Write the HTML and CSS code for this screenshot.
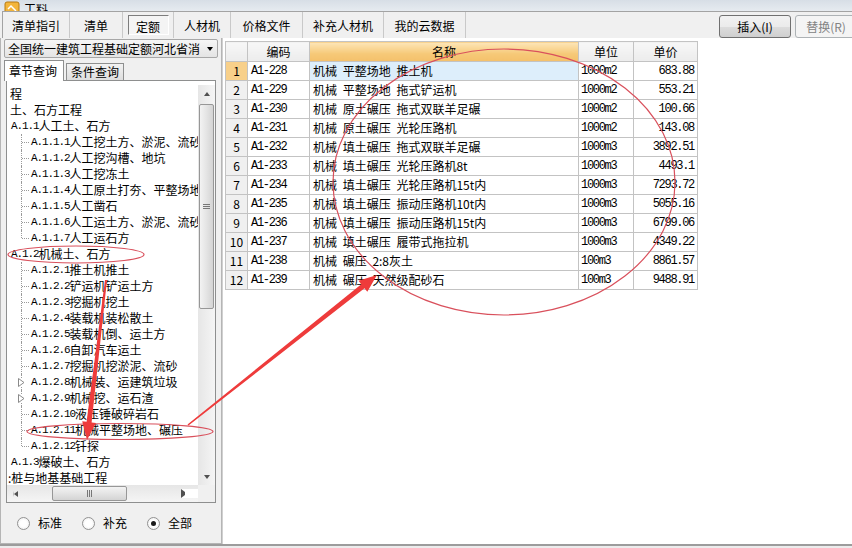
FILE: index.html
```html
<!DOCTYPE html>
<html lang="zh-CN">
<head>
<meta charset="utf-8">
<title>工料</title>
<link rel="stylesheet" href="styles.css">
</head>
<body>
<div class="app">
  <div class="titlebar">
    <svg class="ticon" width="16" height="16" viewBox="0 0 16 16"><rect x="1" y="2" width="14" height="13" rx="2" fill="#f3b53b" stroke="#b77a12"/><path d="M4 9 L7 6 L12 11" stroke="#fff" stroke-width="1.5" fill="none"/></svg>
    <span class="ttitle">工料</span>
  </div>
  <div class="toolbar">
    <div class="tabs">
      <div class="tab t1">清单指引</div>
      <div class="tab t2">清单</div>
      <div class="tab t3"><span class="pressed">定额</span></div>
      <div class="tab t4">人材机</div>
      <div class="tab t5">价格文件</div>
      <div class="tab t6">补充人材机</div>
      <div class="tab t7">我的云数据</div>
    </div>
    <div class="tbright">
      <button class="btn">插入(I)</button>
      <button class="btn off" disabled>替换(R)</button>
    </div>
  </div>
  <div class="main">
    <div class="left">
      <div class="combo"><span class="combo-text">全国统一建筑工程基础定额河北省消</span><span class="combo-arrow"></span></div>
      <div class="qtabs">
        <div class="qtab on">章节查询</div>
        <div class="qtab">条件查询</div>
      </div>
      <div class="treebox">
        <div class="treeview">
          <div class="tree">
            <div class="node l0">程</div>
            <div class="node l0">土、石方工程</div>
            <div class="node l1"><span class="code">A.1.1</span>人工土、石方</div>
            <div class="node l2"><span class="gut"></span><span class="code">A.1.1.1</span>人工挖土方、淤泥、流砂</div>
            <div class="node l2"><span class="gut"></span><span class="code">A.1.1.2</span>人工挖沟槽、地坑</div>
            <div class="node l2"><span class="gut"></span><span class="code">A.1.1.3</span>人工挖冻土</div>
            <div class="node l2"><span class="gut"></span><span class="code">A.1.1.4</span>人工原土打夯、平整场地</div>
            <div class="node l2"><span class="gut"></span><span class="code">A.1.1.5</span>人工凿石</div>
            <div class="node l2"><span class="gut"></span><span class="code">A.1.1.6</span>人工运土方、淤泥、流砂</div>
            <div class="node l2 last"><span class="gut"></span><span class="code">A.1.1.7</span>人工运石方</div>
            <div class="node l1"><span class="code">A.1.2</span>机械土、石方</div>
            <div class="node l2"><span class="gut"></span><span class="code">A.1.2.1</span>推土机推土</div>
            <div class="node l2"><span class="gut"></span><span class="code">A.1.2.2</span>铲运机铲运土方</div>
            <div class="node l2"><span class="gut"></span><span class="code">A.1.2.3</span>挖掘机挖土</div>
            <div class="node l2"><span class="gut"></span><span class="code">A.1.2.4</span>装载机装松散土</div>
            <div class="node l2"><span class="gut"></span><span class="code">A.1.2.5</span>装载机倒、运土方</div>
            <div class="node l2"><span class="gut"></span><span class="code">A.1.2.6</span>自卸汽车运土</div>
            <div class="node l2"><span class="gut"></span><span class="code">A.1.2.7</span>挖掘机挖淤泥、流砂</div>
            <div class="node l2 exp"><span class="gut"><svg class="tri" width="7" height="9" viewBox="0 0 7 9"><path d="M0.5 0.5 L6 4.5 L0.5 8.5 Z" fill="#fff" stroke="#8a8a8a"/></svg></span><span class="code">A.1.2.8</span>机械装、运建筑垃圾</div>
            <div class="node l2 exp"><span class="gut"><svg class="tri" width="7" height="9" viewBox="0 0 7 9"><path d="M0.5 0.5 L6 4.5 L0.5 8.5 Z" fill="#fff" stroke="#8a8a8a"/></svg></span><span class="code">A.1.2.9</span>机械挖、运石渣</div>
            <div class="node l2"><span class="gut"></span><span class="code">A.1.2.10</span>液压锤破碎岩石</div>
            <div class="node l2 sel"><span class="gut"></span><span class="code">A.1.2.11</span>机械平整场地、碾压</div>
            <div class="node l2 last"><span class="gut"></span><span class="code">A.1.2.12</span>钎探</div>
            <div class="node l1"><span class="code">A.1.3</span>爆破土、石方</div>
            <div class="node l0 cut">:桩与地基基础工程</div>
          </div>
          <div class="vscroll">
            <div class="sbtn"><span class="arr up"></span></div>
            <div class="vthumb"><span class="grip v"></span></div>
            <div class="vtrack"></div>
            <div class="sbtn"><span class="arr down"></span></div>
          </div>
        </div>
        <div class="hrow">
          <div class="hscroll">
            <div class="sbtn h"><span class="arr left"></span></div>
            <div class="hgap"></div>
            <div class="hthumb"><span class="grip h"></span></div>
            <div class="htrack"></div>
            <div class="sbtn h"><span class="arr right"></span></div>
          </div>
          <div class="corner"></div>
        </div>
      </div>
      <div class="radios">
        <label class="radio"><span class="dot"></span>标准</label>
        <label class="radio"><span class="dot"></span>补充</label>
        <label class="radio"><span class="dot on"></span>全部</label>
      </div>
    </div>
    <div class="right">
      <table class="grid">
        <colgroup><col class="w-num"><col class="w-code"><col class="w-name"><col class="w-unit"><col class="w-price"></colgroup>
        <thead>
          <tr><th class="num"></th><th>编码</th><th class="selcol">名称</th><th>单位</th><th>单价</th></tr>
        </thead>
        <tbody>
          <tr class="cur"><td class="num">1</td><td class="code">A1-228</td><td class="name">机械 平整场地 推土机</td><td class="unit">1000m2</td><td class="price">683.88</td></tr>
          <tr><td class="num">2</td><td class="code">A1-229</td><td class="name">机械 平整场地 拖式铲运机</td><td class="unit">1000m2</td><td class="price">553.21</td></tr>
          <tr><td class="num">3</td><td class="code">A1-230</td><td class="name">机械 原土碾压 拖式双联羊足碾</td><td class="unit">1000m2</td><td class="price">100.66</td></tr>
          <tr><td class="num">4</td><td class="code">A1-231</td><td class="name">机械 原土碾压 光轮压路机</td><td class="unit">1000m2</td><td class="price">143.08</td></tr>
          <tr><td class="num">5</td><td class="code">A1-232</td><td class="name">机械 填土碾压 拖式双联羊足碾</td><td class="unit">1000m3</td><td class="price">3892.51</td></tr>
          <tr><td class="num">6</td><td class="code">A1-233</td><td class="name">机械 填土碾压 光轮压路机8t</td><td class="unit">1000m3</td><td class="price">4493.1</td></tr>
          <tr><td class="num">7</td><td class="code">A1-234</td><td class="name">机械 填土碾压 光轮压路机15t内</td><td class="unit">1000m3</td><td class="price">7293.72</td></tr>
          <tr><td class="num">8</td><td class="code">A1-235</td><td class="name">机械 填土碾压 振动压路机10t内</td><td class="unit">1000m3</td><td class="price">5055.16</td></tr>
          <tr><td class="num">9</td><td class="code">A1-236</td><td class="name">机械 填土碾压 振动压路机15t内</td><td class="unit">1000m3</td><td class="price">6799.06</td></tr>
          <tr><td class="num">10</td><td class="code">A1-237</td><td class="name">机械 填土碾压 履带式拖拉机</td><td class="unit">1000m3</td><td class="price">4349.22</td></tr>
          <tr><td class="num">11</td><td class="code">A1-238</td><td class="name">机械 碾压 2:8灰土</td><td class="unit">100m3</td><td class="price">8861.57</td></tr>
          <tr><td class="num">12</td><td class="code">A1-239</td><td class="name">机械 碾压 天然级配砂石</td><td class="unit">100m3</td><td class="price">9488.91</td></tr>
        </tbody>
      </table>
    </div>
  </div>
  <div class="bottomline"></div>
  <svg class="annot" width="852" height="548" viewBox="0 0 852 548">
    <ellipse cx="504" cy="182" rx="171" ry="133" fill="none" stroke="#d9505c" stroke-width="1.2"/>
    <ellipse cx="76" cy="254.5" rx="68" ry="8.5" fill="none" stroke="#d9505c" stroke-width="1.2"/>
    <ellipse cx="120" cy="431.5" rx="93" ry="8" fill="none" stroke="#d9505c" stroke-width="1.2"/>
    <polygon points="105,279.9 107,280.1 91.6,422.4 96,422.9 87,440 82.2,421.3 86.6,421.8" fill="#ee3b3b"/>
    <polygon points="187.5,424.4 188.5,425.6 364.5,288.2 367.3,291.7 377,275 358.5,280.7 361.3,284.3" fill="#ee3b3b"/>
  </svg>
</div>
</body>
</html>
```
FILE: styles.css
```css
html, body { margin: 0; padding: 0; }
body {
  width: 852px; height: 548px; overflow: hidden;
  background: #f0f0f0;
  font-family: "Noto Sans CJK SC", "Liberation Sans", sans-serif;
  font-size: 12px; color: #000;
}
.app { position: relative; width: 852px; height: 548px; display: flex; flex-direction: column; overflow: hidden; }

/* title bar remnant */
.titlebar {
  height: 11px; flex: none; overflow: hidden;
  background: linear-gradient(#d7dee6, #e6ebf0);
  display: flex; align-items: flex-end; gap: 4px; padding-left: 4px;
}
.ticon { flex: none; margin-bottom: -5px; }
.ttitle { font-size: 12px; line-height: 10px; height: 10px; margin-bottom: -3px; overflow: hidden; }

/* toolbar */
.toolbar { height: 27px; flex: none; display: flex; }
.tabs {
  display: flex; margin-left: 2px;
  border-top: 1px solid #a3a3a3; border-left: 1px solid #a3a3a3;
  height: 26px;
}
.tab {
  display: flex; align-items: center; justify-content: center;
  border-right: 1px solid #c9c9c9; box-sizing: border-box; height: 26px;
  font-size: 12px;
}
.t1 { width: 67px; } .t2 { width: 53px; } .t3 { width: 51px; } .t4 { width: 57px; }
.t5 { width: 72px; } .t6 { width: 81px; } .t7 { width: 82px; }
.pressed {
  display: flex; align-items: center; justify-content: center;
  width: 41px; height: 20px; box-sizing: border-box;
  border: 1px solid; border-color: #7d7d7d #ffffff #ffffff #7d7d7d;
  background: #f4f4f4; padding-top: 2px;
}
.tbright {
  flex: 1; border-top: 1px solid #a3a3a3;
  display: flex; justify-content: flex-end; align-items: flex-start;
  gap: 4px; padding-top: 3px; margin-right: -5px;
}
.btn {
  font-family: "Noto Sans CJK SC", sans-serif; font-size: 12px;
  height: 23px; width: 72px; padding: 0; line-height: 20px;
  border: 1px solid #707070; border-radius: 3px;
  background: linear-gradient(#f2f2f2 0%, #ebebeb 50%, #dddddd 51%, #cfcfcf 100%);
  color: #000;
}
.btn.off { width: 62px; border-color: #adb2b5; background: #f4f4f4; color: #838383; }

/* main */
.main { display: flex; height: 506px; flex: none; }
.left {
  width: 222px; flex: none; box-sizing: border-box;
  border-left: 1px solid #b5b5b5; border-right: 1px solid #b5b5b5; border-bottom: 1px solid #b5b5b5;
  display: flex; flex-direction: column;
}
.combo {
  margin: 1px 0 0 3px; width: 214px; height: 19px; box-sizing: border-box;
  border: 1px solid #a7a7a7; border-radius: 2px;
  background: linear-gradient(#f6f6f6, #e4e4e4);
  display: flex; align-items: center; justify-content: space-between;
  padding: 0 4px 0 3px;
}
.combo-text { line-height: 16px; white-space: nowrap; }
.combo-arrow { width: 0; height: 0; border-left: 3.5px solid transparent; border-right: 3.5px solid transparent; border-top: 4px solid #000; }
.qtabs { display: flex; align-items: flex-end; height: 22px; margin-left: 3px; gap: 2px; }
.qtab {
  height: 17px; line-height: 16px; padding: 0 4px; box-sizing: border-box;
  border: 1px solid #8e8f8f; border-bottom: none;
  background: linear-gradient(#f2f2f2, #dedede);
}
.qtab.on { height: 21px; line-height: 20px; background: #fff; width: 60px; margin-bottom: -1px; position: relative; z-index: 1; padding-left: 4px; }
.treebox {
  margin-left: 5px; width: 210px; height: 423px; box-sizing: border-box;
  border: 1px solid #8e8f8f; background: #fff;
  display: flex; flex-direction: column;
}
.treeview { flex: 1; display: flex; min-height: 0; padding-top: 4px; }
.tree { flex: 1; overflow: hidden; padding-top: 1px; }
.node { display: flex; height: 16px; line-height: 16px; white-space: nowrap; }
.l0 { padding-left: 3px; }
.l0.cut { padding-left: 1px; }
.l1 { padding-left: 4px; }
.code { font-family: "Liberation Mono", monospace; font-size: 11px; letter-spacing: -1.1px; }
.gut { width: 24px; flex: none; position: relative; }
.l2 .gut::before { content: ""; position: absolute; left: 14px; top: 0; bottom: 0; border-left: 1px dotted #9a9a9a; }
.l2.last .gut::before { bottom: 8px; }
.l2 .gut::after { content: ""; position: absolute; left: 15px; top: 8px; width: 7px; border-top: 1px dotted #9a9a9a; }
.l2.exp .gut::after { display: none; }
.tri { position: absolute; left: 11px; top: 4px; background: #fff; }

.vscroll { width: 17px; flex: none; display: flex; flex-direction: column; background: linear-gradient(90deg, #e6e6e6, #f5f5f5); }
.sbtn { width: 17px; height: 17px; flex: none; display: flex; align-items: center; justify-content: center; }
.arr { width: 0; height: 0; }
.arr.up { border-left: 3.5px solid transparent; border-right: 3.5px solid transparent; border-bottom: 4px solid #505050; }
.arr.down { border-left: 3.5px solid transparent; border-right: 3.5px solid transparent; border-top: 4px solid #505050; }
.arr.left { border-top: 3.5px solid transparent; border-bottom: 3.5px solid transparent; border-right: 4px solid #505050; }
.arr.right { border-top: 3.5px solid transparent; border-bottom: 3.5px solid transparent; border-left: 4px solid #505050; }
.vthumb {
  margin: 2px 1px 0 1px; height: 205px; flex: none; box-sizing: border-box;
  border: 1px solid #979797; border-radius: 2px;
  background: linear-gradient(90deg, #f3f3f3, #e4e4e4 50%, #d4d4d4);
  display: flex; align-items: center; justify-content: center;
}
.vtrack { flex: 1; }
.grip.v { width: 7px; height: 6px; background: repeating-linear-gradient(#777 0 1px, transparent 1px 2px); }
.grip.h { width: 6px; height: 7px; background: repeating-linear-gradient(90deg, #777 0 1px, transparent 1px 2px); }
.hrow { display: flex; height: 17px; flex: none; }
.hscroll { flex: 1; display: flex; background: linear-gradient(#e6e6e6, #f5f5f5); }
.hgap { width: 28px; flex: none; }
.hthumb {
  width: 75px; flex: none; margin: 1px 0; box-sizing: border-box;
  border: 1px solid #979797; border-radius: 2px;
  background: linear-gradient(#f3f3f3, #e4e4e4 50%, #d4d4d4);
  display: flex; align-items: center; justify-content: center;
}
.htrack { flex: 1; }
.corner { width: 17px; flex: none; background: #f0f0f0; }

.radios { flex: 1; display: flex; align-items: center; padding-left: 16px; gap: 20px; }
.radio { display: flex; align-items: center; gap: 8px; line-height: 16px; }
.dot {
  width: 13px; height: 13px; box-sizing: border-box; border-radius: 50%;
  border: 1px solid #929292;
  background: radial-gradient(circle at 50% 50%, #ffffff 0 40%, #e8e8e8 100%);
  display: flex; align-items: center; justify-content: center;
}
.dot.on::after { content: ""; width: 5px; height: 5px; border-radius: 50%; background: #1a1a1a; }

/* right grid */
.right { flex: 1; background: #fff; padding: 3px 0 0 2px; border-left: 1px solid #d0d0d0; }
.grid { border-collapse: collapse; table-layout: fixed; width: 473px; }
.w-num { width: 22px; } .w-code { width: 62px; } .w-name { width: 269px; } .w-unit { width: 55px; } .w-price { width: 64px; }
.grid th, .grid td {
  border: 1px solid #c3c3c3; padding: 0 3px; height: 18px; line-height: 16px;
  white-space: nowrap; overflow: hidden; text-align: left; font-weight: normal;
}
.grid th { height: 19px; text-align: center; background: linear-gradient(#f7f7f7, #ececec); font-size: 12px; }
.grid th.selcol { background: linear-gradient(#fde6b8, #f6c978 60%, #f4c06a); }
.grid td.num { background: #f0f0f0; text-align: center; padding: 0; font-family: "Noto Sans CJK SC", sans-serif; }
.grid tr.cur td.num { background: #f8d08a; }
.grid tr.cur td.name { background: #ddeefb; }
.grid td.code, .grid td.unit, .grid td.price { font-family: "Liberation Mono", monospace; font-size: 12px; letter-spacing: -1.3px; }
.grid td.unit { padding-left: 2px; }
.grid td.price { text-align: right; }
.grid td.name { word-spacing: 3px; }

.bottomline { flex: 1; border-top: 2px solid #9c9c9c; background: #ececec; }

.annot { position: absolute; left: 0; top: 0; pointer-events: none; }
```
